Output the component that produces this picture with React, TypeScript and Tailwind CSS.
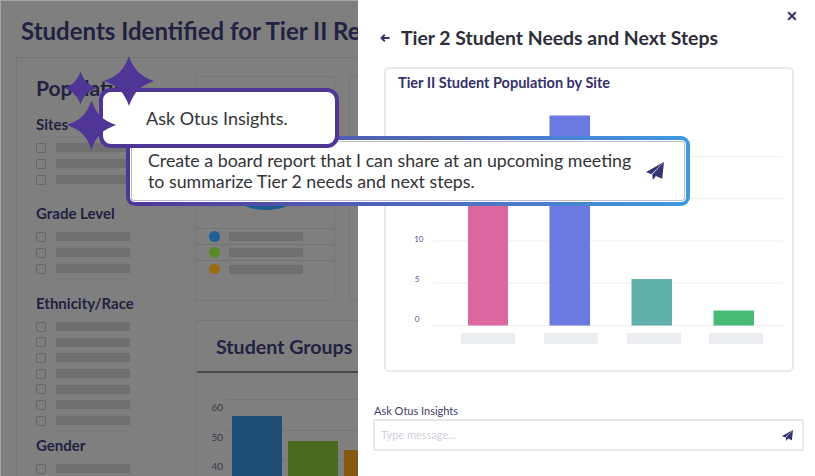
import React from "react";

const STAR = "M0 -25 C5 -11 11 -5 25 0 C11 5 5 11 0 25 C-5 11 -11 5 -25 0 C-11 -5 -5 -11 0 -25 Z";

function Star({ className }: { className: string }) {
  return (
    <svg viewBox="-25 -25 50 50" className={className}>
      <path d={STAR} fill="#4e3596" />
    </svg>
  );
}

function Send({ className }: { className: string }) {
  return (
    <svg viewBox="0 0 20 20" className={className}>
      <path d="M20 0 L0 11 L6 13.5 Z" fill="#37336f" />
      <path d="M20 0 L7 14 L7.5 20 L11 15.5 L18 18.5 Z" fill="#37336f" />
    </svg>
  );
}

function Option() {
  return (
    <div className="flex h-[9px] items-center gap-[10px]">
      <span className="h-[10px] w-[10px] rounded-[2px] border border-[#666666]" />
      <span className="h-[9px] w-[74px] bg-[#6f6f6f]" />
    </div>
  );
}

function Group({ title, n, className, gapClass = "gap-[7px]" }: { title: string; n: number; className: string; gapClass?: string }) {
  return (
    <div className={className}>
      <h3 className="text-[15px] leading-[20px] font-bold text-[#222240]">{title}</h3>
      <div className={`mt-[9px] flex flex-col ${gapClass}`}>
        {Array.from({ length: n }).map((_, i) => (
          <Option key={i} />
        ))}
      </div>
    </div>
  );
}

function LegendRow({ dot, last = false }: { dot: string; last?: boolean }) {
  return (
    <div className={`flex h-[16px] items-center gap-[9px] pl-[13px] ${last ? "" : "border-b border-[#747474]"}`}>
      <span className={`h-[10.5px] w-[10.5px] rounded-full ${dot}`} />
      <span className="h-[9px] w-[74px] bg-[#6f6f6f]" />
    </div>
  );
}

function LeftPanel() {
  return (
    <div className="h-full w-[358px] shrink-0 overflow-hidden border-t border-l border-[#a5a5a5] bg-[#7f7f7f] pl-[20px]">
      <h1 className="mt-[14px] text-[24px] leading-[32px] font-bold whitespace-nowrap text-[#222240]">
        Students Identified for Tier II Reports
      </h1>
      <div className="mt-[10px] ml-[-5px] flex h-[500px] w-[360px] border-t border-l border-[#767676]">
        <div className="w-[178px] shrink-0 pl-[19px]">
          <h2 className="mt-[16px] text-[21px] leading-[28px] font-bold text-[#222240]">Population</h2>
          <Group title="Sites" n={3} className="mt-[12px]" />
          <Group title="Grade Level" n={3} className="mt-[19px]" />
          <Group title="Ethnicity/Race" n={7} className="mt-[20px]" gapClass="gap-[6.7px]" />
          <Group title="Gender" n={2} className="mt-[10px]" />
        </div>
        <div className="w-[170px] shrink-0">
          <div className="mt-[18px] flex gap-[14px]">
            <div className="h-[225px] w-[140px] shrink-0 border border-[#767676]">
              <div className="relative h-[152px] overflow-hidden border-b border-[#747474]">
                <div className="absolute top-[19px] left-[13px] h-[114px] w-[114px] rounded-full bg-[#1d5d8f]" />
              </div>
              <LegendRow dot="bg-[#1f6097]" />
              <LegendRow dot="bg-[#5a8a28]" />
              <LegendRow dot="bg-[#9c6a16]" last />
            </div>
            <div className="h-[225px] w-[140px] shrink-0 border border-[#767676]" />
          </div>
          <div className="mt-[19px] w-[170px] border-t border-l border-[#767676]">
            <div className="h-[50px] pl-[20px] text-[19.6px] leading-[52px] font-bold whitespace-nowrap text-[#222240]">
              Student Groups
            </div>
            <div className="ml-[1px] h-[2px] bg-[#4a4a4a]" />
            <svg width="170" height="106" className="block">
              <g stroke="#767676" strokeWidth="1">
                <line x1="31" x2="170" y1="26.5" y2="26.5" />
                <line x1="31" x2="170" y1="57.5" y2="57.5" />
                <line x1="31" x2="170" y1="87.5" y2="87.5" />
              </g>
              <g fill="#3a3a46" fontSize="10" fontFamily="Lato" textAnchor="end">
                <text x="27" y="38">60</text>
                <text x="27" y="68">50</text>
                <text x="27" y="97">40</text>
              </g>
              <rect x="36" y="43" width="50" height="63" fill="#1f4e75" />
              <rect x="92" y="68" width="50" height="38" fill="#4a691f" />
              <rect x="148" y="77" width="22" height="29" fill="#85590f" />
            </svg>
          </div>
        </div>
      </div>
    </div>
  );
}

function MainChart() {
  const yo = 92;
  const xo = 386;
  const grid = [156.5, 198.5, 241, 283, 325.5];
  const ph = [461, 544, 627, 709];
  return (
    <svg width="405" height="277" className="block">
      {grid.map((y) => (
        <line key={y} x1={433 - xo} x2={783 - xo} y1={y - yo} y2={y - yo} stroke="#eceef3" strokeWidth="1" />
      ))}
      <g fill="#55527c" fontSize="8" fontFamily="Lato" textAnchor="end">
        <text x={423.5 - xo} y={242 - yo}>10</text>
        <text x={419.5 - xo} y={282 - yo}>5</text>
        <text x={419.5 - xo} y={322 - yo}>0</text>
      </g>
      <rect x={468 - xo} y={190 - yo} width="40" height="135.5" fill="#dd67a1" />
      <rect x={549.5 - xo} y={115.5 - yo} width="40.5" height="210" fill="#6c79e0" />
      <rect x={631.5 - xo} y={279 - yo} width="40.5" height="46.5" fill="#60b0a9" />
      <rect x={713.5 - xo} y={310.5 - yo} width="40.5" height="15" fill="#47bb76" />
      {ph.map((x) => (
        <rect key={x} x={x - xo} y={333 - yo} width="54" height="11" fill="#ecedf0" />
      ))}
    </svg>
  );
}

function RightPanel() {
  return (
    <div className="h-full flex-1 bg-white">
      <div className="flex justify-end pt-[10px] pr-[17px]">
        <svg width="12" height="12" viewBox="0 0 12 12" fill="none" stroke="#37336f" strokeWidth="2">
          <path d="M2.2 2.2 L9.8 9.8 M9.8 2.2 L2.2 9.8" />
        </svg>
      </div>
      <div className="mt-[1px] flex h-[30px] items-center pl-[22px]">
        <svg width="10" height="10" viewBox="0 0 10 10" fill="none" stroke="#37336f" strokeWidth="1.9">
          <path d="M9.5 5 H1.5 M4.8 1.8 L1.5 5 L4.8 8.2" />
        </svg>
        <h2 className="ml-[11px] text-[19.4px] leading-[28px] font-bold whitespace-nowrap text-[#2d2e3a]">
          Tier 2 Student Needs and Next Steps
        </h2>
      </div>
      <div className="mt-[14px] ml-[26px] h-[305px] w-[410px] overflow-hidden rounded-[5px] border-2 border-[#e9e9eb]">
        <div className="h-[23px] pt-[5px] pl-[12px] text-[14.5px] leading-[18px] font-bold whitespace-nowrap text-[#35316b]">
          Tier II Student Population by Site
        </div>
        <MainChart />
      </div>
      <div className="mt-[32px] ml-[16px] text-[11px] leading-[14px] text-[#3f3c6b]">Ask Otus Insights</div>
      <div className="mt-[1px] ml-[15px] flex h-[32px] w-[431px] items-center justify-between rounded-[2px] border-2 border-[#e8e8ea] pr-[9px] pl-[6px]">
        <span className="text-[11px] text-[#d0d0d6]">Type message...</span>
        <Send className="h-[11px] w-[11px]" />
      </div>
    </div>
  );
}

export default function App() {
  return (
    <div className="relative flex h-[476px] w-[815px] overflow-hidden font-['Lato',sans-serif]">
      <LeftPanel />
      <RightPanel />

      <div className="absolute top-[136px] left-[126px] h-[70px] w-[564px] rounded-[9px] bg-gradient-to-r from-[#4e3596] to-[#3b9ae1] p-[5px]">
        <div className="flex h-full items-center rounded-[3px] border border-[#bdbad2] bg-white pr-[20px] pl-[16px] outline outline-1 outline-white">
          <p className="w-[490px] shrink-0 text-[17.8px] leading-[21.5px] text-[#333338]">
            Create a board report that I can share at an upcoming meeting to summarize Tier 2 needs and next steps.
          </p>
          <Send className="ml-auto h-[18px] w-[18px]" />
        </div>
      </div>

      <div className="absolute top-[88px] left-[99px] flex h-[60px] w-[240px] items-center rounded-[12px] border-[4px] border-[#4e3596] bg-white pl-[43px] text-[18px] text-[#333338]">
        Ask Otus Insights.
      </div>

      <Star className="absolute top-[71px] left-[64px] h-[34px] w-[33px]" />
      <Star className="absolute top-[56px] left-[104px] h-[50px] w-[50px]" />
      <Star className="absolute top-[100px] left-[67px] h-[50px] w-[49px]" />
    </div>
  );
}
